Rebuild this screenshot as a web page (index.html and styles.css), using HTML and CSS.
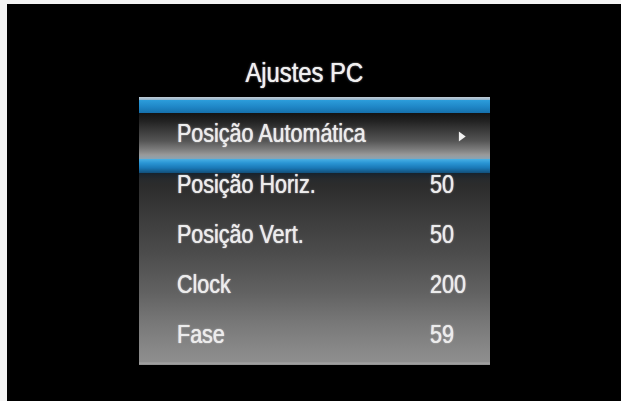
FILE: index.html
```html
<!DOCTYPE html>
<html>
    <head>
        <title>Ajustes PC</title>
        <meta name="viewport" content="width=device-width, initial-scale=1.0">
        <link rel="stylesheet" href="styles.css">
    </head>
    <body>
        <div class="screen">
            <div class="menu">
                <h3 class="title"><span>Ajustes PC</span></h3>
                <div class="row selected">
                    <span class="label">Posição Automática</span>
                    <span class="value">
                        <svg class="arrow" width="9" height="11" viewBox="0 0 9 11">
                            <path d="M0.5 0.5 L8.5 5.5 L0.5 10.5 Z" fill="#f2f2f2"/>
                        </svg>
                    </span>
                </div>
                <div class="list">
                    <div class="row">
                        <span class="label">Posição Horiz.</span>
                        <span class="value">50</span>
                    </div>
                    <div class="row">
                        <span class="label">Posição Vert.</span>
                        <span class="value">50</span>
                    </div>
                    <div class="row">
                        <span class="label">Clock</span>
                        <span class="value">200</span>
                    </div>
                    <div class="row">
                        <span class="label">Fase</span>
                        <span class="value">59</span>
                    </div>
                </div>
            </div>
        </div>
    </body>
</html>
```

FILE: styles.css
```css
html, body {
    height: 100%;
}
body {
    margin: 0;
    background-color: #f4f4f4;
    font-family: "Liberation Sans", Arial, sans-serif;
    color: #ececec;
}
.screen {
    box-sizing: border-box;
    height: calc(100% - 4px);
    margin: 4px 0 0 7px;
    padding-top: 52px;
    background-color: #000;
}
.menu {
    width: 351px;
    margin-left: 132px;
}
/* the OSD font is a condensed grotesk: squeeze Arial metrics */
.title {
    margin: 0 0 7px;
    padding-right: 20px;
    font-size: 28px;
    font-weight: normal;
    line-height: 34px;
    text-align: center;
    color: #f0f0f0;
    text-shadow: 0 0 1px #fff, 0 0 3px rgba(255, 255, 255, 0.3);
}
.title span {
    display: inline-block;
    transform: scaleX(0.85);
}
.row {
    display: grid;
    grid-template-columns: 253px auto;
    align-items: center;
    padding-left: 38px;
    font-size: 25px;
    line-height: 22px;
    text-shadow: 0 0 1px #fff, 0 0 3px rgba(255, 255, 255, 0.25);
}
.label, .value {
    white-space: nowrap;
    transform: scaleX(0.86);
    transform-origin: left center;
}
.selected {
    height: 76px;
    box-sizing: border-box;
    padding-top: 21px;
    padding-bottom: 25px;
    line-height: 30px;
    align-items: start;
    background: linear-gradient(to bottom,
        #c2ccd6 0px, #8fb3cc 3px,
        #2c9ddb 3px, #1f86c6 10px, #1670ac 16px,
        #141414 16px, #222 24px, #3c3c3c 34px, #555 44px,
        #7a7a7a 52px, #9a9a9a 58px, #8aa4b4 62px,
        #49b0e4 62px, #2a95d4 66px, #1a78b6 71px, #124f7a 76px);
}
.arrow {
    display: block;
    margin: 13px 0 0 33px;
}
.list {
    display: flex;
    flex-direction: column;
    gap: 28px;
    padding-bottom: 20px;
    background: linear-gradient(to bottom,
        #17232e 0px, #272a2d 6px, #2c2c2c 12px, #3a3a3a 40px,
        #4c4c4c 80px, #626262 120px, #787878 150px,
        #8a8a8a 180px, #8e8e8e 189px, #a6a6a6 190px, #8c8c8c 192px);
}
```
